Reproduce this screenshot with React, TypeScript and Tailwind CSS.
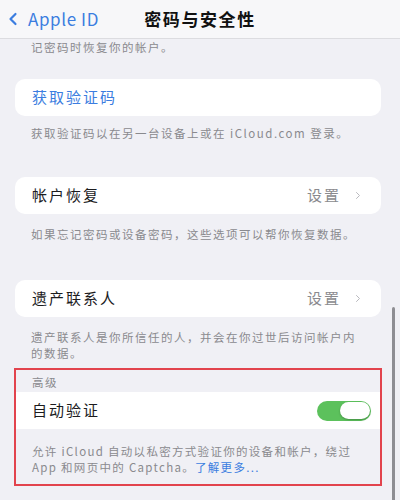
import { ChevronLeft, ChevronRight } from 'lucide-react';

const font = { fontFamily: '"Noto Sans CJK SC", "Noto Sans", sans-serif' };

function Footer({ children, className = '' }: { children: React.ReactNode; className?: string }) {
  return (
    <p className={`pl-[17px] pr-[16px] text-[11.5px] leading-[16px] tracking-[1.5px] text-[#8a8a8e] ${className}`}>
      {children}
    </p>
  );
}

function RowCard({ label, value }: { label: string; value?: string }) {
  return (
    <div className="mx-[1px] flex h-[37px] items-center justify-between rounded-[10px] bg-white pl-[17px] pr-[17px]">
      <span className="text-[15px] tracking-[2px] text-[#1c1c1e]">{label}</span>
      {value && (
        <span className="flex items-center gap-[11px]">
          <span className="text-[15px] tracking-[2px] text-[#8a8a8e]">{value}</span>
          <ChevronRight className="h-[15px] w-[12px] text-[#b9b9be]" strokeWidth={2} />
        </span>
      )}
    </div>
  );
}

export default function App() {
  return (
    <div className="relative h-[500px] w-[400px] overflow-hidden bg-[#f0f0f5]" style={font}>
      <header className="grid h-[39px] grid-cols-[1fr_auto_1fr] items-center border-b border-[#dcdce0] bg-[#f7f7f9]">
        <div className="flex items-center pl-[3px] text-[#3b7de0]">
          <ChevronLeft className="h-[26px] w-[20px]" strokeWidth={2.6} />
          <span className="ml-[5px] text-[17px] tracking-[0.6px]">Apple ID</span>
        </div>
        <h1 className="text-[17px] font-bold tracking-[1.6px] text-[#111]">密码与安全性</h1>
        <div />
      </header>

      <main className="pl-[14px] pr-[18px]">
        <Footer>记密码时恢复你的帐户。</Footer>

        <div className="mx-[1px] mt-[24px] flex h-[37px] items-center rounded-[10px] bg-white pl-[17px]">
          <span className="text-[15px] tracking-[2px] text-[#3b7de0]">获取验证码</span>
        </div>
        <Footer className="mt-[9px]">获取验证码以在另一台设备上或在 iCloud.com 登录。</Footer>

        <div className="mt-[36px]">
          <RowCard label="帐户恢复" value="设置" />
        </div>
        <Footer className="mt-[12px]">如果忘记密码或设备密码，这些选项可以帮你恢复数据。</Footer>

        <div className="mt-[38px]">
          <RowCard label="遗产联系人" value="设置" />
        </div>
        <Footer className="mt-[12px]">遗产联系人是你所信任的人，并会在你过世后访问帐户内的数据。</Footer>

        <section className="mt-[7px] border-2 border-[#e2434d] pb-[9px] pt-[4px]">
          <p className="pl-[16px] text-[11.5px] leading-[16px] tracking-[1.5px] text-[#8a8a8e]">高级</p>
          <div className="mt-[2px] flex h-[37px] items-center justify-between bg-white pl-[16px] pr-[9px]">
            <span className="text-[15px] tracking-[2px] text-[#1c1c1e]">自动验证</span>
            <div className="flex h-[20px] w-[54px] items-center justify-end rounded-full bg-[#5cc15c] p-[1.5px]">
              <div className="h-[17px] w-[30px] rounded-full bg-white shadow-[0_1px_2px_rgba(0,0,0,0.25)]" />
            </div>
          </div>
          <p className="mt-[14px] pl-[16px] pr-[10px] text-[11.5px] leading-[16px] tracking-[1.3px] text-[#8a8a8e]">
            允许 iCloud 自动以私密方式验证你的设备和帐户，绕过 App 和网页中的 Captcha。<span className="text-[#3b7de0]">了解更多...</span>
          </p>
        </section>
      </main>

      <div className="absolute right-[5px] top-[307px] h-[200px] w-[3px] rounded-full bg-[#8e8e93]" />
    </div>
  );
}
